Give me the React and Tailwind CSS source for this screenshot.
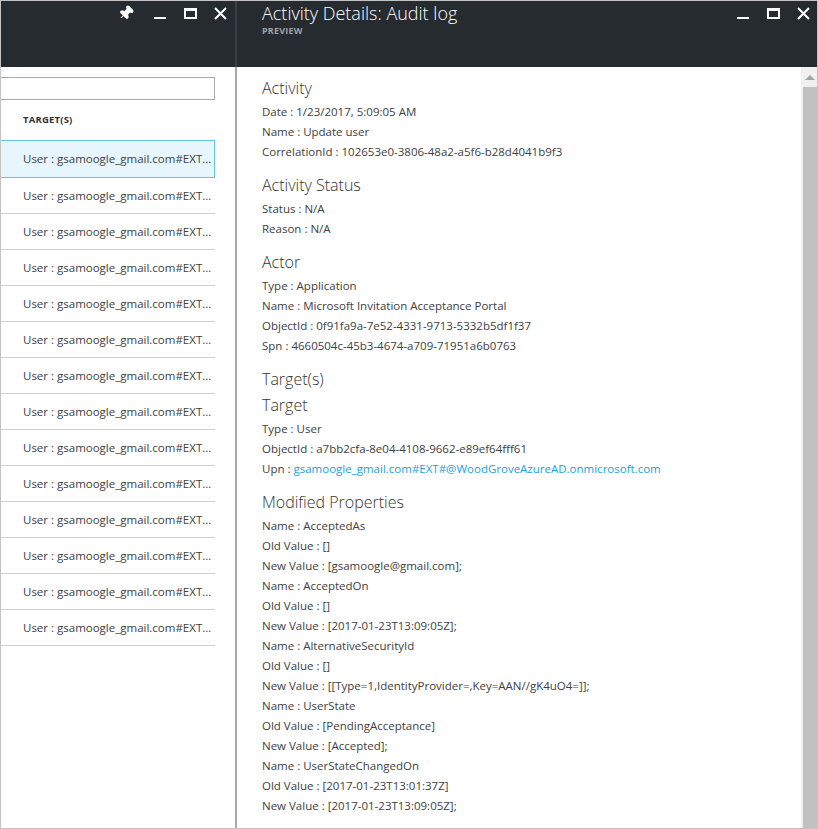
import React from 'react'
import { Pin } from 'lucide-react'

const ROWS = Array.from({ length: 14 }, (_, i) => i)

const SECTIONS = [
  {
    title: 'Activity',
    lines: [
      ['Date', '1/23/2017, 5:09:05 AM'],
      ['Name', 'Update user'],
      ['CorrelationId', '102653e0-3806-48a2-a5f6-b28d4041b9f3'],
    ],
  },
  {
    title: 'Activity Status',
    lines: [
      ['Status', 'N/A'],
      ['Reason', 'N/A'],
    ],
  },
  {
    title: 'Actor',
    lines: [
      ['Type', 'Application'],
      ['Name', 'Microsoft Invitation Acceptance Portal'],
      ['ObjectId', '0f91fa9a-7e52-4331-9713-5332b5df1f37'],
      ['Spn', '4660504c-45b3-4674-a709-71951a6b0763'],
    ],
  },
]

const MODIFIED = [
  ['Name', 'AcceptedAs'],
  ['Old Value', '[]'],
  ['New Value', '[gsamoogle@gmail.com];'],
  ['Name', 'AcceptedOn'],
  ['Old Value', '[]'],
  ['New Value', '[2017-01-23T13:09:05Z];'],
  ['Name', 'AlternativeSecurityId'],
  ['Old Value', '[]'],
  ['New Value', '[[Type=1,IdentityProvider=,Key=AAN//gK4uO4=]];'],
  ['Name', 'UserState'],
  ['Old Value', '[PendingAcceptance]'],
  ['New Value', '[Accepted];'],
  ['Name', 'UserStateChangedOn'],
  ['Old Value', '[2017-01-23T13:01:37Z]'],
  ['New Value', '[2017-01-23T13:09:05Z];'],
]

function Minimize() {
  return <span className="block w-[12px] h-[2px] bg-white mt-[10px]" />
}

function Maximize() {
  return <span className="block w-[13px] h-[11px] border-2 border-t-[3px] border-white" />
}

function Close() {
  return (
    <svg width="13" height="13" viewBox="0 0 13 13">
      <path d="M1 1 L12 12 M12 1 L1 12" stroke="white" strokeWidth="2" />
    </svg>
  )
}

function Line({ label, value }) {
  return (
    <div className="h-[20px] pt-px leading-[20px] text-[11.5px] text-[#404040] whitespace-nowrap">
      {label} : {value}
    </div>
  )
}

function Heading({ children }) {
  return <div className="h-[26px] leading-[26px] text-[16px] text-[#333] font-light">{children}</div>
}

export default function App() {
  return (
    <div className="w-[818px] h-[829px] border border-[#c3c3c3] flex overflow-hidden bg-white font-['Segoe_UI','Open_Sans',sans-serif]">
      {/* Left blade */}
      <div className="w-[234px] flex flex-col shrink-0">
        <div className="h-[66px] bg-[#262b30] flex justify-end items-start">
          <div className="flex h-[24px] items-center">
            <span className="w-[30px] flex justify-center pr-[8px]">
              <Pin className="w-[16px] h-[16px] text-white rotate-45" fill="white" strokeWidth={1.5} />
            </span>
            <span className="w-[30px] flex justify-center"><Minimize /></span>
            <span className="w-[30px] flex justify-center"><Maximize /></span>
            <span className="w-[30px] flex justify-center"><Close /></span>
          </div>
        </div>
        <div className="w-[214px] pt-[10px]">
          <div className="h-[23px] border border-[#a9a9a9] border-l-0" />
          <div className="h-[40px] flex items-center pl-[22px] text-[9.5px] font-bold text-[#333] tracking-[0.2px]">
            TARGET(S)
          </div>
          {ROWS.map((i) => (
            <div
              key={i}
              className={`flex items-center pl-[22px] text-[11.5px] text-[#404040] whitespace-nowrap overflow-hidden ${
                i === 0
                  ? 'h-[38px] bg-[#e6f6fc] border-y border-r border-[#65c3e3]'
                  : 'h-[36px] border-b border-[#cfcfcf]'
              }`}
            >
              User : gsamoogle_gmail.com#EXT...
            </div>
          ))}
        </div>
      </div>

      {/* Divider */}
      <div className="w-[2px] shrink-0 flex flex-col">
        <div className="h-[66px] bg-[#3a4045]" />
        <div className="flex-1 bg-[#a8a8a8]" />
      </div>

      {/* Right blade */}
      <div className="flex-1 flex flex-col min-w-0">
        <div className="h-[66px] bg-[#262b30] flex items-start justify-between pl-[25px]">
          <div>
            <div className="text-[18px] leading-[24px] text-white font-light">Activity Details: Audit log</div>
            <div className="text-[9px] leading-[12px] font-bold text-[#9da3a8] tracking-[0.2px]">PREVIEW</div>
          </div>
          <div className="flex h-[24px] items-center mr-[-1px]">
            <span className="w-[30px] flex justify-center"><Minimize /></span>
            <span className="w-[30px] flex justify-center"><Maximize /></span>
            <span className="w-[30px] flex justify-center"><Close /></span>
          </div>
        </div>
        <div className="flex-1 flex min-h-0">
          <div className="flex-1 pl-[25px] pt-[8px] overflow-hidden">
            {SECTIONS.map((s) => (
              <div key={s.title} className="mb-[11px]">
                <Heading>{s.title}</Heading>
                {s.lines.map(([l, v]) => (
                  <Line key={l} label={l} value={v} />
                ))}
              </div>
            ))}
            <div className="mb-[11px]">
              <Heading>Target(s)</Heading>
              <Heading>Target</Heading>
              <Line label="Type" value="User" />
              <Line label="ObjectId" value="a7bb2cfa-8e04-4108-9662-e89ef64fff61" />
              <div className="h-[20px] pt-px leading-[20px] text-[11.5px] text-[#404040] whitespace-nowrap">
                Upn : <span className="text-[#1ba1e2]">gsamoogle_gmail.com#EXT#@WoodGroveAzureAD.onmicrosoft.com</span>
              </div>
            </div>
            <div>
              <Heading>Modified Properties</Heading>
              {MODIFIED.map(([l, v], i) => (
                <Line key={i} label={l} value={v} />
              ))}
            </div>
          </div>
          {/* Scrollbar */}
          <div className="w-[16px] shrink-0 bg-[#f0f0f0] flex flex-col">
            <div className="h-[20px] flex items-center justify-center pl-[2px]">
              <span className="w-0 h-0 border-x-[5px] border-x-transparent border-b-[5px] border-b-[#a3a3a3]" />
            </div>
            <div className="flex-1 ml-[2px] bg-[#c1c1c1]" />
          </div>
        </div>
      </div>
    </div>
  )
}
